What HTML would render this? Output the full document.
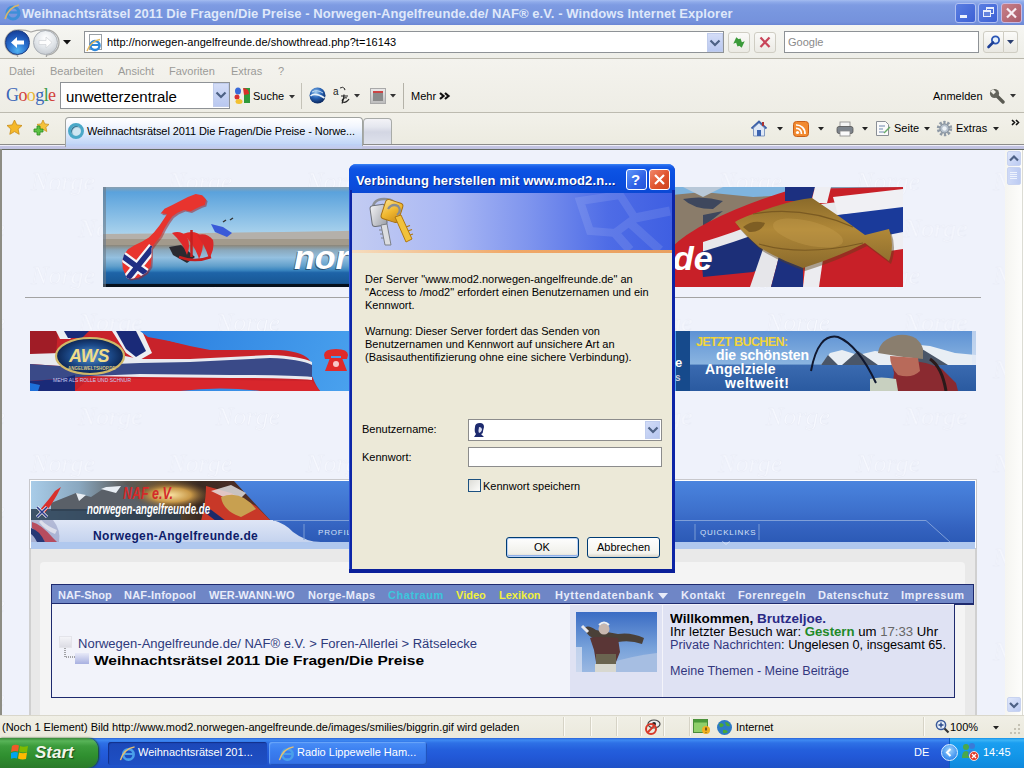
<!DOCTYPE html>
<html><head><meta charset="utf-8">
<style>
*{margin:0;padding:0;box-sizing:border-box}
html,body{width:1024px;height:768px;overflow:hidden;background:#f0f1f8;font-family:"Liberation Sans",sans-serif;}
.a{position:absolute}
.t{position:absolute;white-space:nowrap;line-height:1}
</style></head><body>
<!-- TITLE BAR -->
<div class="a" style="left:0;top:0;width:1024px;height:25px;background:linear-gradient(#a4bcf0 0,#8eaaea 2px,#7e9be2 5px,#7896df 50%,#7592dc 88%,#6a86d4 100%)"></div>
<svg class="a" style="left:3px;top:3px" width="18" height="18" viewBox="0 0 18 18"><circle cx="10" cy="10" r="6" fill="none" stroke="#3d8fd8" stroke-width="3"/><path d="M5 9.5h10" stroke="#3d8fd8" stroke-width="2.4"/><path d="M2 16C4 8 10 3 16 2" fill="none" stroke="#d9b56a" stroke-width="1.6"/></svg>
<div class="t" style="left:22px;top:7px;font-size:13px;font-weight:bold;color:#dfe8fa;letter-spacing:0.07px">Weihnachtsrätsel 2011 Die Fragen/Die Preise - Norwegen-Angelfreunde.de/ NAF® e.V. - Windows Internet Explorer</div>
<div class="a" style="left:955px;top:3px;width:21px;height:20px;border:1px solid #b0c0f2;border-radius:3px;background:linear-gradient(135deg,#5a7ee2,#3d60d4)"></div>
<div class="a" style="left:960px;top:15px;width:7px;height:3px;background:#eef2fc"></div>
<div class="a" style="left:978px;top:3px;width:20px;height:20px;border:1px solid #b0c0f2;border-radius:3px;background:linear-gradient(135deg,#5a7ee2,#3d60d4)"></div>
<div class="a" style="left:986px;top:7px;width:8px;height:7px;border:1px solid #e8eefc;border-top-width:2px"></div>
<div class="a" style="left:983px;top:10px;width:8px;height:7px;border:1px solid #e8eefc;border-top-width:2px;background:#6384de"></div>
<div class="a" style="left:1001px;top:3px;width:21px;height:20px;border:1px solid #c8b8e0;border-radius:3px;background:linear-gradient(135deg,#c88088,#a85a6a)"></div>
<svg class="a" style="left:1001px;top:3px" width="21" height="20"><path d="M6 5.5L15 14.5M15 5.5L6 14.5" stroke="#f8eef4" stroke-width="2.2"/></svg>

<!-- ADDRESS ROW -->
<div class="a" style="left:0;top:25px;width:1024px;height:33px;background:linear-gradient(#f6f6f2,#eeeee8)"></div>
<div class="a" style="left:0;top:58px;width:1024px;height:1px;background:#b8b6ab"></div>
<!-- nav pill -->
<svg class="a" style="left:3px;top:28px" width="58" height="29"><path d="M14.5 2 Q22 1.5 28 4 Q34 1.5 43.5 2 A12.5 12.5 0 1 1 43.5 27 A12.5 12.5 0 0 1 14.5 27 A12.5 12.5 0 0 1 14.5 2z" fill="none" stroke="#a8a8a6" stroke-width="1.3"/></svg>
<div class="a" style="left:5px;top:30px;width:25px;height:25px;border-radius:50%;background:radial-gradient(circle at 50% 85%,#52b4f2 0,#2a72d0 40%,#1a4aa8 75%,#123a8a 100%);border:1px solid #1a3a80"></div>
<svg class="a" style="left:5px;top:30px" width="25" height="25"><path d="M6 12.5L12 7v3.5h7v4h-7V18z" fill="#fff"/></svg>
<div class="a" style="left:33px;top:30px;width:25px;height:25px;border-radius:50%;background:radial-gradient(circle at 50% 30%,#ffffff 0,#e2e6ea 50%,#b9bfc6 100%);border:1px solid #a9aeb4"></div>
<svg class="a" style="left:33px;top:30px" width="25" height="25"><path d="M19 12.5L13 7v3.5H6v4h7V18z" fill="#fdfdfd" stroke="#c9cdd2" stroke-width="0.6"/></svg>
<svg class="a" style="left:63px;top:40px" width="10" height="6"><path d="M0 0h8L4 4.5z" fill="#111"/></svg>
<!-- address box -->
<div class="a" style="left:84px;top:31px;width:640px;height:22px;background:#fff;border:1px solid #8e9296"></div>
<div class="a" style="left:89px;top:34px;width:13px;height:16px;background:#fff;border:1px solid #9aa0a6"></div>
<svg class="a" style="left:86px;top:38px" width="16" height="14" viewBox="0 0 16 14"><circle cx="9" cy="7.5" r="4.5" fill="none" stroke="#2c86d8" stroke-width="2.5"/><path d="M4.5 7h9" stroke="#2c86d8" stroke-width="2"/><path d="M1 13C3 7 8 2 14 1.5" fill="none" stroke="#e3b85c" stroke-width="1.4"/></svg>
<div class="t" style="left:107px;top:37px;font-size:11px;color:#000;letter-spacing:0.05px">http://norwegen-angelfreunde.de/showthread.php?t=16143</div>
<div class="a" style="left:707px;top:33px;width:16px;height:19px;background:linear-gradient(#d4ddf7,#b9c8f0);border:1px solid #c0ccec"></div>
<svg class="a" style="left:709px;top:39px" width="12" height="8"><path d="M1.5 1.5L6 6l4.5-4.5" fill="none" stroke="#4d6185" stroke-width="2.2"/></svg>
<!-- refresh / stop -->
<div class="a" style="left:728px;top:32px;width:22px;height:21px;border:1px solid #cfcdc3;border-radius:3px;background:linear-gradient(#fafaf8,#ebeae4)"></div>
<svg class="a" style="left:730px;top:34px" width="18" height="17"><path d="M8 3L3 8h3v4h3V8h2z" fill="#3b9a3a" transform="rotate(-20 8 8)"/><path d="M10 14l5-5h-3V5H9v4H7z" fill="#3b9a3a" transform="rotate(-20 10 9)"/></svg>
<div class="a" style="left:754px;top:32px;width:22px;height:21px;border:1px solid #cfcdc3;border-radius:3px;background:linear-gradient(#fafaf8,#ebeae4)"></div>
<svg class="a" style="left:754px;top:32px" width="22" height="21"><path d="M6.5 5.5L15.5 15M15.5 5.5L6.5 15" stroke="#c8455a" stroke-width="2.2"/></svg>
<!-- search box -->
<div class="a" style="left:784px;top:31px;width:195px;height:22px;background:#fff;border:1px solid #8e9296"></div>
<div class="t" style="left:788px;top:37px;font-size:11px;color:#8a8a8a">Google</div>
<div class="a" style="left:983px;top:31px;width:21px;height:22px;border:1px solid #cfcdc3;border-radius:3px 0 0 3px;background:linear-gradient(#fbfbf9,#e9e8e2)"></div>
<svg class="a" style="left:986px;top:34px" width="16" height="16"><circle cx="9.5" cy="6" r="3.6" fill="#e6f1fb" stroke="#2a55b5" stroke-width="1.8"/><path d="M7 8.5L2.5 13" stroke="#1d3f95" stroke-width="2.6" stroke-linecap="round"/></svg>
<div class="a" style="left:1004px;top:31px;width:14px;height:22px;border:1px solid #cfcdc3;border-left:none;border-radius:0 3px 3px 0;background:linear-gradient(#fbfbf9,#e9e8e2)"></div>
<svg class="a" style="left:1007px;top:40px" width="8" height="5"><path d="M0 0h7L3.5 4z" fill="#2b3f70"/></svg>

<!-- MENU + GOOGLE -->
<div class="a" style="left:0;top:59px;width:1024px;height:53px;background:linear-gradient(#f4f3ee,#eeede5)"></div>
<div class="a" style="left:0;top:112px;width:1024px;height:1px;background:#bdbbb0"></div>
<div class="t" style="left:9px;top:66px;font-size:11px;color:#9b9b98;word-spacing:0px">Datei</div>
<div class="t" style="left:50px;top:66px;font-size:11px;color:#9b9b98">Bearbeiten</div>
<div class="t" style="left:118px;top:66px;font-size:11px;color:#9b9b98">Ansicht</div>
<div class="t" style="left:169px;top:66px;font-size:11px;color:#9b9b98">Favoriten</div>
<div class="t" style="left:231px;top:66px;font-size:11px;color:#9b9b98">Extras</div>
<div class="t" style="left:278px;top:66px;font-size:11px;color:#9b9b98">?</div>
<!-- google logo -->
<div class="t" style="left:6px;top:86px;font-family:'Liberation Serif',serif;font-size:18px;letter-spacing:-0.6px"><span style="color:#3a66b8">G</span><span style="color:#d2413a">o</span><span style="color:#e8b534">o</span><span style="color:#3a66b8">g</span><span style="color:#3a9c4a">l</span><span style="color:#d2413a">e</span></div>
<div class="a" style="left:60px;top:82px;width:170px;height:27px;background:#fff;border:1px solid #8e9296"></div>
<div class="t" style="left:66px;top:89px;font-size:15px;color:#000">unwetterzentrale</div>
<div class="a" style="left:213px;top:83px;width:16px;height:24px;background:linear-gradient(#d4ddf7,#b9c8f0);border:1px solid #c0ccec"></div>
<svg class="a" style="left:215px;top:91px" width="12" height="8"><path d="M1.5 1.5L6 6l4.5-4.5" fill="none" stroke="#4d6185" stroke-width="2.2"/></svg>
<svg class="a" style="left:233px;top:86px" width="18" height="19"><path d="M11 2 H17 V17 H11z" fill="#2f9a3a"/><path d="M10 2 Q16 2 16 8 L11 9z" fill="#d8302a"/><ellipse cx="5" cy="5" rx="3" ry="3.5" fill="#3a6ad8"/><ellipse cx="4" cy="11" rx="2.5" ry="2.5" fill="#d83030"/><ellipse cx="6" cy="15.5" rx="3.5" ry="2.5" fill="#f2c030"/></svg>
<div class="t" style="left:253px;top:91px;font-size:11px;color:#000">Suche</div>
<svg class="a" style="left:289px;top:95px" width="7" height="4"><path d="M0 0h6L3 3.5z" fill="#333"/></svg>
<div class="a" style="left:301px;top:83px;width:1px;height:26px;background:#c4c2b8"></div>
<svg class="a" style="left:309px;top:87px" width="17" height="17"><defs><radialGradient id="ge" cx="0.4" cy="0.3" r="0.7"><stop offset="0" stop-color="#9ccaf0"/><stop offset="0.5" stop-color="#2a66b8"/><stop offset="1" stop-color="#0a2860"/></radialGradient></defs><circle cx="8.5" cy="8.5" r="8" fill="url(#ge)"/><path d="M1.5 9 Q6 5 15.5 11" fill="none" stroke="#e8f2fa" stroke-width="1.6"/><path d="M3 5 Q8 2 14 6" fill="none" stroke="#cfe4f6" stroke-width="0.9"/></svg>
<svg class="a" style="left:333px;top:86px" width="20" height="20" viewBox="0 0 20 20"><text x="0" y="9" font-family="Liberation Sans" font-size="10" fill="#222">a</text><path d="M7 2 Q10 0 12 3" fill="none" stroke="#333" stroke-width="1"/><path d="M11 3.5l1 -0.5 -0.2 1.2" fill="none" stroke="#333" stroke-width="0.8"/><path d="M8 10h7M11 8.5c0 4 -1 7 -2 9M14 12c-3 -1 -6 2 -4 4c2 1 5 -1 6 -3" fill="none" stroke="#222" stroke-width="1.2"/></svg>
<svg class="a" style="left:354px;top:94px" width="7" height="4"><path d="M0 0h6L3 3.5z" fill="#333"/></svg>
<div class="a" style="left:370px;top:88px;width:16px;height:16px;border:1px solid #a9a9a9;background:linear-gradient(#e8e8e8,#bdbdbd)"></div>
<div class="a" style="left:373px;top:91px;width:10px;height:10px;background:#8a8a8a;border-top:2px solid #c44"></div>
<svg class="a" style="left:390px;top:94px" width="7" height="4"><path d="M0 0h6L3 3.5z" fill="#333"/></svg>
<div class="a" style="left:403px;top:83px;width:1px;height:26px;background:#b4b2a8"></div>
<div class="t" style="left:411px;top:91px;font-size:11px;color:#000">Mehr</div>
<svg class="a" style="left:439px;top:92px" width="12" height="8"><path d="M1 1L4.5 4 1 7M6 1l3.5 3L6 7" fill="none" stroke="#111" stroke-width="2.2"/></svg>
<div class="t" style="left:933px;top:91px;font-size:11px;color:#000">Anmelden</div>
<svg class="a" style="left:989px;top:88px" width="18" height="16"><path d="M7 7L14 14" stroke="#5a5a52" stroke-width="3.4" stroke-linecap="round"/><circle cx="5.5" cy="5.5" r="4.6" fill="#64645c"/><path d="M1.5 3.5L4.5 6.5 7 4 4 1z" fill="#eeede5"/></svg>
<svg class="a" style="left:1010px;top:94px" width="7" height="4"><path d="M0 0h6L3 3.5z" fill="#333"/></svg>

<!-- TAB ROW -->
<div class="a" style="left:0;top:113px;width:1024px;height:32px;background:linear-gradient(#f2f1ea,#ecebe0)"></div>
<svg class="a" style="left:6px;top:119px" width="17" height="17" viewBox="0 0 17 17"><path d="M8.5 1l2.3 4.9 5.2.6-3.9 3.6 1.1 5.2-4.7-2.7-4.7 2.7 1.1-5.2L1 6.5l5.2-.6z" fill="#f5b82a" stroke="#c88a12" stroke-width="0.8"/></svg>
<svg class="a" style="left:33px;top:119px" width="17" height="17" viewBox="0 0 17 17"><path d="M10 1l1.8 3.9 4.2.5-3.1 2.9.9 4.2-3.8-2.2-3.8 2.2.9-4.2L4 5.4l4.2-.5z" fill="#f5c23a" stroke="#c88a12" stroke-width="0.7"/><path d="M1 10h3V7h3v3h3v3H7v3H4v-3H1z" fill="#5cc244" stroke="#2c8a20" stroke-width="0.8"/></svg>
<div class="a" style="left:65px;top:117px;width:298px;height:29px;border:1px solid #a0a3a0;border-bottom:none;border-radius:4px 4px 0 0;background:linear-gradient(#ffffff 0,#f2f6fe 30%,#dae7fb 60%,#bcd2f6 100%)"></div>
<div class="a" style="left:68px;top:123px;width:16px;height:16px;border-radius:50%;border:3px solid #4aa8c8;background:#cfe6f2;box-shadow:inset 1px 1px 1px #2a6a8a"></div>
<div class="t" style="left:87px;top:126px;font-size:11px;color:#000;letter-spacing:-0.09px">Weihnachtsrätsel 2011 Die Fragen/Die Preise - Norwe...</div>
<div class="a" style="left:363px;top:118px;width:29px;height:27px;border:1px solid #a8aba8;border-bottom:none;border-radius:4px 4px 0 0;background:linear-gradient(#f3f3f7 0,#e5e7ef 30%,#d3d6e3 50%,#dfe2ec 100%)"></div>
<div class="a" style="left:0;top:144px;width:1024px;height:5px;background:linear-gradient(#8c8c8a 0,#8c8c8a 1px,#eeeef8 1px,#eeeef8 2px,#c4c4e2 2px,#c0c2e0 100%)"></div>

<div class="a" style="left:66px;top:144px;width:296px;height:5px;background:linear-gradient(#bcd2f6,#c2cdf0 60%,#c0c4e4)"></div>
<div class="a" style="left:65px;top:144px;width:1px;height:3px;background:#a0a3a0"></div><div class="a" style="left:362px;top:144px;width:1px;height:2px;background:#a0a3a0"></div>
<div class="a" style="left:0;top:149px;width:1024px;height:1px;background:#646a62"></div>
<!-- right tools -->
<svg class="a" style="left:750px;top:120px" width="18" height="17" viewBox="0 0 18 17"><path d="M1.5 8.5L9 1.5l7.5 7" fill="none" stroke="#3b5fa8" stroke-width="1.8"/><path d="M3.5 8v8h11V8L9 3z" fill="#dfe8f6" stroke="#6a86b8" stroke-width="0.8"/><rect x="7" y="10" width="4" height="6" fill="#3c64b0"/><rect x="12" y="2" width="2" height="4" fill="#a33"/></svg>
<svg class="a" style="left:777px;top:127px" width="7" height="4"><path d="M0 0h6L3 3.5z" fill="#222"/></svg>
<svg class="a" style="left:793px;top:121px" width="16" height="16"><rect x="0.5" y="0.5" width="15" height="15" rx="3" fill="#f28a30" stroke="#c8601a"/><circle cx="4.5" cy="11.5" r="1.6" fill="#fff"/><path d="M3 7.5a5 5 0 0 1 5.5 5.5M3 4a8.5 8.5 0 0 1 9 9" fill="none" stroke="#fff" stroke-width="1.7"/></svg>
<svg class="a" style="left:818px;top:127px" width="7" height="4"><path d="M0 0h6L3 3.5z" fill="#222"/></svg>
<svg class="a" style="left:836px;top:121px" width="18" height="16"><rect x="4" y="1" width="10" height="5" fill="#f4f4f4" stroke="#888" stroke-width="0.8"/><rect x="1" y="5.5" width="16" height="7" rx="2" fill="#7d848c" stroke="#555" stroke-width="0.8"/><rect x="4" y="10" width="10" height="5" fill="#fafafa" stroke="#888" stroke-width="0.8"/></svg>
<svg class="a" style="left:862px;top:127px" width="7" height="4"><path d="M0 0h6L3 3.5z" fill="#222"/></svg>
<svg class="a" style="left:875px;top:120px" width="17" height="17"><path d="M1.5 1.5h9l3 3v11h-12z" fill="#fafafa" stroke="#8a8f96"/><path d="M4 6h6M4 9h4M4 12h5" stroke="#6f87b0" stroke-width="1.2"/><path d="M9 13l6-6" stroke="#6a6" stroke-width="1.4"/></svg>
<div class="t" style="left:894px;top:123px;font-size:11px;color:#000">Seite</div>
<svg class="a" style="left:924px;top:127px" width="7" height="4"><path d="M0 0h6L3 3.5z" fill="#222"/></svg>
<svg class="a" style="left:936px;top:120px" width="17" height="17" viewBox="0 0 17 17"><circle cx="8.5" cy="8.5" r="6.2" fill="none" stroke="#8f9aa6" stroke-width="3" stroke-dasharray="2.3 1.6"/><circle cx="8.5" cy="8.5" r="4.6" fill="#b5c0cc" stroke="#7a8694"/><circle cx="8.5" cy="8.5" r="2.2" fill="#eef3f8"/></svg>
<div class="t" style="left:956px;top:123px;font-size:11px;color:#000">Extras</div>
<svg class="a" style="left:993px;top:127px" width="7" height="4"><path d="M0 0h6L3 3.5z" fill="#222"/></svg>
<svg class="a" style="left:1011px;top:119px" width="10" height="7"><path d="M1 1L3.5 3.5 1 6M5 1l2.5 2.5L5 6" fill="none" stroke="#111" stroke-width="1.6"/></svg>

<!-- CONTENT -->
<div class="a" style="left:2px;top:150px;width:1022px;height:565px;background:#eff2fb;overflow:hidden"></div>
<div class="a" style="left:0;top:149px;width:2px;height:566px;background:#8d8d84"></div>
<svg class="a" style="left:2px;top:150px" width="1003" height="565"><defs><pattern id="wm" patternUnits="userSpaceOnUse" width="137.5" height="94" x="-2" y="-150"><text x="78.5" y="49" font-family="Liberation Serif" font-style="italic" font-size="26" fill="#f7f9ff" stroke="#e7eaf5" stroke-width="0.5">Norge</text><text x="-59" y="49" font-family="Liberation Serif" font-style="italic" font-size="26" fill="#f7f9ff" stroke="#e7eaf5" stroke-width="0.5">Norge</text><text x="31" y="96" font-family="Liberation Serif" font-style="italic" font-size="26" fill="#f7f9ff" stroke="#e7eaf5" stroke-width="0.5">Norge</text><text x="31" y="2" font-family="Liberation Serif" font-style="italic" font-size="26" fill="#f7f9ff" stroke="#e7eaf5" stroke-width="0.5">Norge</text></pattern></defs><rect width="1003" height="565" fill="url(#wm)"/></svg>

<!-- scrollbar -->
<div class="a" style="left:1005px;top:150px;width:17px;height:565px;background:linear-gradient(90deg,#f5f5f1,#fdfdfb)"></div>
<div class="a" style="left:1022px;top:150px;width:2px;height:565px;background:#fff;border-left:1px solid #dcdcd4"></div>
<div class="a" style="left:1007px;top:151px;width:14px;height:15px;border:1px solid #c8d3f0;border-radius:2px;background:linear-gradient(135deg,#dfe7fb,#bccbf2)"></div>
<svg class="a" style="left:1008px;top:153px" width="12" height="10"><path d="M2 7.5L6 3.5l4 4" fill="none" stroke="#4d6185" stroke-width="2.2"/></svg>
<div class="a" style="left:1007px;top:167px;width:14px;height:18px;border:1px solid #c8d3f0;border-radius:2px;background:linear-gradient(90deg,#cfdaf7,#bccbf2)"></div>
<div class="a" style="left:1010px;top:172px;width:7px;height:1px;background:#eef3fd;box-shadow:0 2px 0 #eef3fd,0 4px 0 #eef3fd,0 6px 0 #eef3fd"></div>
<div class="a" style="left:1007px;top:697px;width:14px;height:15px;border:1px solid #c8d3f0;border-radius:2px;background:linear-gradient(135deg,#dfe7fb,#bccbf2)"></div>
<svg class="a" style="left:1008px;top:700px" width="12" height="10"><path d="M2 3L6 7l4-4" fill="none" stroke="#4d6185" stroke-width="2.2"/></svg>

<!-- BANNER 1 -->
<svg class="a" style="left:103px;top:187px" width="800" height="100" viewBox="0 0 800 100">
<defs>
<linearGradient id="sky" x1="0" y1="0" x2="0" y2="1"><stop offset="0" stop-color="#8aa0b0"/><stop offset="0.05" stop-color="#5aa2dc"/><stop offset="0.45" stop-color="#a6d0ec"/><stop offset="0.5" stop-color="#b8d8ea"/></linearGradient>
<linearGradient id="sea" x1="0" y1="0" x2="0" y2="1"><stop offset="0" stop-color="#8c8678"/><stop offset="0.12" stop-color="#8aa8bc"/><stop offset="0.3" stop-color="#94c0e0"/><stop offset="0.5" stop-color="#62a0cc"/><stop offset="0.6" stop-color="#3a86c0"/><stop offset="0.66" stop-color="#1e64a8"/><stop offset="0.9" stop-color="#185896"/><stop offset="1" stop-color="#0c2a50"/></linearGradient>
<linearGradient id="fish" x1="0" y1="0" x2="0" y2="1"><stop offset="0" stop-color="#8a6a2a"/><stop offset="0.45" stop-color="#b08838"/><stop offset="1" stop-color="#8a6a2c"/></linearGradient>
</defs>
<rect width="800" height="100" fill="url(#sky)"/>
<path d="M0 47 L100 46 L180 45 L240 44 L300 42 L360 40 L400 39 L440 30 L470 36 L520 28 L570 22 L570 60 L0 60z" fill="#b4b0aa"/>
<path d="M330 46 L380 42 L420 34 L450 26 L490 30 L530 24 L570 20 L570 58 L330 58z" fill="#4a5460" opacity="0.75"/>
<path d="M380 50 L450 40 L520 36 L570 34 L570 58 L380 58z" fill="#8a7a66" opacity="0.8"/>
<rect y="52" width="570" height="8" fill="#a09888" opacity="0.9"/>
<rect y="58" width="800" height="42" fill="url(#sea)"/>
<rect y="97" width="800" height="3" fill="#06101c"/>
<rect width="3" height="100" fill="#6a7a88" opacity="0.6"/>
<!-- norway map -->
<path d="M23.7,90.8 19.8,81.7 19.2,73.9 21.1,67.4 25,62.2 31.5,58.3 39.3,54.4 45.9,50.5 51.1,45.3 56.3,38.8 61.5,31 64.1,27 57.6,26.4 61.5,21.8 69.3,17.9 77.1,14 84.9,10.1 92.7,6.9 99.2,8.2 103.1,12.7 101.8,17.9 97.9,19.2 92.7,21.8 87.5,24.4 81,23.1 74.5,25.7 69.3,29.6 65.4,34.9 61.5,41.4 57.6,49.2 52.4,55.7 48.5,60.9 48.5,70 47.8,79.1 43.3,85.6 35.4,90.8 26.3,92.1z" fill="#b01a1a" transform="translate(1.5,1.5)" opacity="0.5"/>
<path d="M23.7,90.8 19.8,81.7 19.2,73.9 21.1,67.4 25,62.2 31.5,58.3 39.3,54.4 45.9,50.5 51.1,45.3 56.3,38.8 61.5,31 64.1,27 57.6,26.4 61.5,21.8 69.3,17.9 77.1,14 84.9,10.1 92.7,6.9 99.2,8.2 103.1,12.7 101.8,17.9 97.9,19.2 92.7,21.8 87.5,24.4 81,23.1 74.5,25.7 69.3,29.6 65.4,34.9 61.5,41.4 57.6,49.2 52.4,55.7 48.5,60.9 48.5,70 47.8,79.1 43.3,85.6 35.4,90.8 26.3,92.1z" fill="#e8342e"/>
<clipPath id="nc"><path d="M23.7,90.8 19.8,81.7 19.2,73.9 21.1,67.4 25,62.2 31.5,58.3 39.3,54.4 45.9,50.5 51.1,45.3 56.3,38.8 61.5,31 64.1,27 57.6,26.4 61.5,21.8 69.3,17.9 77.1,14 84.9,10.1 92.7,6.9 99.2,8.2 103.1,12.7 101.8,17.9 97.9,19.2 92.7,21.8 87.5,24.4 81,23.1 74.5,25.7 69.3,29.6 65.4,34.9 61.5,41.4 57.6,49.2 52.4,55.7 48.5,60.9 48.5,70 47.8,79.1 43.3,85.6 35.4,90.8 26.3,92.1z"/></clipPath>
<g clip-path="url(#nc)"><path d="M18 68 L48 90 M50 60 L22 95" stroke="#f4f4f8" stroke-width="10"/><path d="M18 68 L48 90 M50 60 L22 95" stroke="#1e2e84" stroke-width="5.5"/></g>
<!-- ship -->
<path d="M66 60 L78 58 L92 70 L84 76 L70 68z" fill="#2a2a30"/>
<path d="M69 46 Q78 43 84 50 Q88 58 84 68 Q80 56 69 46z" fill="#e0282a"/>
<path d="M80 47 Q92 42 99 50 Q102 60 96 72 Q92 58 80 47z" fill="#e22a28"/>
<path d="M94 48 Q104 45 110 53 Q112 62 106 72 Q103 60 94 48z" fill="#d82828"/>
<path d="M88.5 43 V70 M76 70 Q92 76 108 70" stroke="#c42020" stroke-width="2.5" fill="none"/>
<path d="M108 37 L120 40 L129 46 L124 50 L112 45z" fill="#3a5ad8"/>
<path d="M120 35 l3 -2 M127 33 l3 -2" stroke="#333" stroke-width="1.5"/>
<text x="190" y="83" font-family="Liberation Sans" font-weight="bold" font-style="italic" font-size="34" fill="#1a2a40" opacity="0.6">nor</text>
<text x="191" y="82" font-family="Liberation Sans" font-weight="bold" font-style="italic" font-size="34" fill="#fff">nor</text>
<!-- flag right -->
<path d="M569 0 H700 L569 60z" fill="#7fb4de"/>
<path d="M569 8 L600 5 L650 10 L690 8 L600 45 L569 60z" fill="#8a7c6a"/>
<path d="M580 12 Q600 8 620 14 L610 22 Q590 22 580 12z M600 28 L620 24 L600 40z" fill="#2a3a5a" opacity="0.8"/>
<path d="M569 60 Q600 30 690 2 L800 0 V100 H569z" fill="#c82028"/>
<path d="M600 55 Q650 40 690 20 L800 8 V30 L700 45 L640 78 L600 82z" fill="#e8e8ec"/>
<path d="M598 65 Q650 50 690 32 L800 22 V52 L710 60 L650 85 L600 90z" fill="#1c2f78"/>
<path d="M647 100 L660 62 L678 62 L668 100z" fill="#e6e6ea"/>
<path d="M668 100 L678 62 L700 62 L700 100z" fill="#1c3080"/>
<path d="M700 100 L703 72 L720 72 L716 100z" fill="#ececf0"/>
<path d="M580 0 H620 L600 10z" fill="#b8c8d8"/>
<path d="M682 0 H712 L708 14 L682 14z" fill="#1c3080"/>
<path d="M712 0 H728 L724 16 L708 16z" fill="#eeeef2"/>
<path d="M730 10 L800 2 V22 L735 28z" fill="#f0f0f4"/>
<path d="M735 28 L800 20 V48 L740 52z" fill="#1a3a9a"/>
<path d="M775 50 L800 45 V62 L780 65z" fill="#eeeef2"/>
<path d="M632 35 Q640 30 670 20 Q695 12 709 11 Q735 28 762 48 L786 42 Q792 58 786 74 L762 56 Q735 70 700 81 Q675 72 656 60 Q640 46 632 35z" fill="#5a4018" opacity="0.45" transform="translate(2,3)"/>
<path d="M632 35 Q640 30 670 20 Q695 12 709 11 Q735 28 762 48 L786 42 Q792 58 786 74 L762 56 Q735 70 700 81 Q675 72 656 60 Q640 46 632 35z" fill="url(#fish)"/>
<path d="M650 27 Q700 18 750 40 M656 57 Q700 70 760 56" fill="none" stroke="#7a5a22" stroke-width="1.1"/>
<path d="M640 40 Q650 32 662 36 Q658 46 646 45z" fill="#7e5e24"/>
<ellipse cx="705" cy="46" rx="36" ry="12" fill="#c8a050" opacity="0.35" transform="rotate(14 705 46)"/>
<text x="570" y="83" font-family="Liberation Sans" font-weight="bold" font-style="italic" font-size="34" fill="#fff">de</text>
</svg>
<div class="a" style="left:25px;top:297px;width:956px;height:1px;background:#a3a3a3"></div>

<!-- BANNER 2 -->
<svg class="a" style="left:30px;top:331px" width="946" height="60" viewBox="0 0 946 60">
<defs><linearGradient id="sk2" gradientUnits="userSpaceOnUse" x1="0" y1="0" x2="300" y2="120"><stop offset="0" stop-color="#1a6cd8"/><stop offset="1" stop-color="#4aa2ee"/></linearGradient>
<radialGradient id="aws" cx="0.5" cy="0.5" r="0.5"><stop offset="0" stop-color="#5a9ad0"/><stop offset="0.6" stop-color="#1c4a8a"/><stop offset="1" stop-color="#0c2450"/></radialGradient>
<linearGradient id="sea2" x1="0" y1="0" x2="0" y2="1"><stop offset="0" stop-color="#5e92d4"/><stop offset="0.55" stop-color="#8ab4e0"/><stop offset="0.57" stop-color="#3a6ab0"/><stop offset="1" stop-color="#2a5aa0"/></linearGradient></defs>
<rect width="946" height="60" fill="url(#sk2)"/>
<!-- left flag -->
<path d="M0 0 H110 Q140 12 180 19 L250 19 Q275 21 280 30 L282 45 Q286 55 290 60 H0z" fill="#c8222a"/>
<path d="M0 0 H28 L26 23 H0z" fill="#a01c26"/>
<path d="M0 23 L30 22 L60 20 L90 24 L110 28 L160 28 L240 24 Q270 25 282 31 L282 49 Q260 47 200 47 L110 46 L60 45 L30 35 L0 33z" fill="#e8eaf0"/>
<path d="M0 33 L30 35 L60 34 L110 32 L160 31 L240 27 Q270 28 282 34 L282 46 Q260 44 200 44 L110 43 L60 45 L30 48 L0 50z" fill="#3a4a88"/>
<path d="M0 50 L30 48 L45 44 L45 60 H0z" fill="#1a2a78"/>
<path d="M0 52 L10 54 L8 60 H0z" fill="url(#sk2)"/>
<path d="M26 0 H50 L40 8 L30 8z" fill="#eceef2"/>
<path d="M34 0 H59 L52 7 L38 7z" fill="#1a2a78"/>
<path d="M82 0 H112 L122 22 L108 30 L96 22z" fill="#eceef2"/>
<path d="M86 0 H106 L116 20 L106 26 L96 18z" fill="#1a2a78"/>
<path d="M110 0 H160 V14 Q140 10 118 6z" fill="url(#sk2)"/>
<path d="M45 60 L60 47 L110 48 L200 49 L282 50 Q286 55 290 60z" fill="#d8262c"/><path d="M150 60 Q190 55 230 60z" fill="url(#sk2)"/>
<ellipse cx="60" cy="25" rx="34" ry="18" fill="url(#aws)" stroke="#d0b868" stroke-width="2.2"/>
<text x="39" y="31" font-family="Liberation Sans" font-weight="bold" font-style="italic" font-size="18" fill="#f0dc8a" letter-spacing="-0.3">AWS</text>
<text x="38" y="39" font-family="Liberation Sans" font-weight="bold" font-size="4.5" fill="#d8c888">ANGELWELTSHOP.DE</text>
<text x="23" y="51" font-family="Liberation Sans" font-size="5" fill="#c8c8f0">MEHR ALS ROLLE UND SCHNUR</text>
<rect x="158" width="1" height="0" fill="none"/>
<path d="M294 24 Q294 18 306 18 Q318 18 318 24 L317 28 L311 28 L311 25 L301 25 L301 28 L295 28z M300 27 L312 27 L317 40 H295z" fill="#e02a2a"/><circle cx="306" cy="33" r="3" fill="#f8c8c8"/>
<!-- right banner -->
<rect x="646" width="14" height="60" fill="#164a8c"/>
<text x="645" y="36" font-family="Liberation Sans" font-weight="bold" font-size="13" fill="#fff">e</text>
<text x="645" y="50" font-family="Liberation Sans" font-weight="bold" font-size="10" fill="#ccd">s</text>
<rect x="660" width="286" height="60" fill="url(#sea2)"/>
<path d="M791 34 L800 22 L812 19 L828 24 L845 20 L860 22 L880 13 L900 15 L925 22 L946 24 V34z" fill="#e8eef4"/>
<path d="M791 34 L798 24 L808 34z M812 34 L828 20 L848 34z M880 34 L892 18 L905 26 L918 34z" fill="#4a5668"/>
<rect x="942" width="4" height="34" fill="#dfe8f6" opacity="0.7"/>
<path d="M862 32 Q888 26 912 38 L926 52 L928 60 H862 L864 42z" fill="#8a2a30"/>
<path d="M900 28 Q912 36 916 60" fill="none" stroke="#2a1a1a" stroke-width="3"/>
<path d="M848 22 Q850 8 868 4 Q888 2 893 18 L893 28 Q870 26 848 22z" fill="#8a7e6e"/>
<path d="M860 25 L888 27 L890 40 Q882 48 868 44 Q860 36 860 25z" fill="#b86a5a"/>
<path d="M840 48 Q850 45 866 48 L868 60 H840z" fill="#c8d0c0"/>
<path d="M781 40 Q788 2 808 6 Q828 14 846 52" fill="none" stroke="#101830" stroke-width="2"/>
<text x="666" y="15" font-family="Liberation Sans" font-weight="bold" font-size="12.5" fill="#f2d43a" letter-spacing="-0.6">JETZT BUCHEN:</text>
<text x="686" y="29" font-family="Liberation Sans" font-weight="bold" font-size="14" fill="#fff" letter-spacing="-0.1">die schönsten</text>
<text x="675" y="43" font-family="Liberation Sans" font-weight="bold" font-size="14" fill="#fff" letter-spacing="0.15">Angelziele</text>
<text x="695" y="57" font-family="Liberation Sans" font-weight="bold" font-size="14" fill="#fff" letter-spacing="0.6">weltweit!</text>
</svg>

<!-- FORUM HEADER -->
<div class="a" style="left:29px;top:479px;width:948px;height:70px;border:1px solid #c8c8cc;background:#fff"></div>
<div class="a" style="left:31px;top:481px;width:944px;height:61px;background:linear-gradient(#4a84de,#3d70cc 50%,#3463c0 75%,#2c5ab6)"></div>
<svg class="a" style="left:31px;top:481px" width="245" height="40" viewBox="0 0 245 40">
<defs><linearGradient id="ph" x1="0" y1="0" x2="1" y2="0"><stop offset="0" stop-color="#a8cce8"/><stop offset="0.2" stop-color="#8aa8c0"/><stop offset="0.4" stop-color="#5a5a58"/><stop offset="0.55" stop-color="#6a5230"/><stop offset="0.7" stop-color="#3a2a22"/><stop offset="1" stop-color="#5a3028"/></linearGradient>
<radialGradient id="sun" cx="0.5" cy="0.5" r="0.5"><stop offset="0" stop-color="#f8e0a0"/><stop offset="0.5" stop-color="#c89848"/><stop offset="1" stop-color="#6a4a2a" stop-opacity="0"/></radialGradient></defs>
<path d="M0 0 H203 L240 40 H0z" fill="url(#ph)"/>
<path d="M20 22 L45 12 L60 16 L75 6 L95 4 L115 14 L130 20 L130 30 L20 30z" fill="#5a6068"/>
<path d="M70 8 L75 6 L90 5 L85 12z M45 12 L55 14 L48 20z" fill="#e8eef4"/>
<ellipse cx="140" cy="14" rx="40" ry="14" fill="url(#sun)"/>
<path d="M0 28 H150 V40 H0z" fill="#2a3e52" opacity="0.85"/>
<path d="M175 5 L200 12 L225 25 L240 40 L170 40 Q175 20 175 5z" fill="#c83828"/>
<path d="M180 10 L200 4 L215 12 L205 22z" fill="#e8e8ea" opacity="0.8"/>
<path d="M190 16 Q210 8 225 28 L210 36 Q192 30 190 16z" fill="#c8a050"/>
<path d="M175 25 L195 40 H185 L172 30z" fill="#1a2a6a"/>
<text x="92" y="18" font-family="Liberation Sans" font-weight="bold" font-style="italic" font-size="16" fill="#d42a2a" textLength="50" lengthAdjust="spacingAndGlyphs">NAF e.V.</text>
<text x="56" y="33" font-family="Liberation Sans" font-weight="bold" font-style="italic" font-size="15" fill="#fff" textLength="123" lengthAdjust="spacingAndGlyphs">norwegen-angelfreunde.de</text>
<path d="M8 30 L18 18 L24 10 L30 6 L26 14 L20 24 L12 34z" fill="#d8302c"/>
<path d="M6 26 L16 36 M16 26 L6 36" stroke="#fff" stroke-width="3"/><path d="M6 26 L16 36 M16 26 L6 36" stroke="#2a3a8a" stroke-width="1.6"/>
</svg>

<svg class="a" style="left:31px;top:520px" width="944" height="29" viewBox="0 0 944 29">
<defs><linearGradient id="lb" x1="0" y1="0" x2="0" y2="1"><stop offset="0" stop-color="#dfe6f6"/><stop offset="1" stop-color="#bccdec"/></linearGradient>
<linearGradient id="tb" x1="0" y1="0" x2="0" y2="1"><stop offset="0" stop-color="#4b78c8"/><stop offset="1" stop-color="#2c5cb6"/></linearGradient></defs>
<path d="M0 0 H242 Q255 4 262 12 Q275 22 290 22 H944 V29 H0z" fill="url(#lb)"/>


<path d="M242 0.5 H895 L919 22" fill="none" stroke="#7f9fd8" stroke-width="1"/>
<rect y="22" width="944" height="7" fill="#b0c8ee"/>
<path d="M0 0 H22 Q30 10 28 22 H0z" fill="#8a90b8" opacity="0.5"/>
<path d="M1 2 Q10 4 22 18 L26 22 H14 Q8 12 1 8z" fill="#b83a4a" opacity="0.85"/>
<path d="M0 8 Q8 10 14 22 H6 Q3 16 0 14z" fill="#1a2a6a" opacity="0.9"/>
<path d="M10 0 Q16 6 26 10 L24 14 Q14 10 8 2z" fill="#f0f0f4" opacity="0.7"/>
<line x1="273" y1="4" x2="273" y2="20" stroke="#7b9cd4"/>
<line x1="664" y1="4" x2="664" y2="20" stroke="#7b9cd4"/>
<line x1="728" y1="4" x2="728" y2="20" stroke="#7b9cd4"/>
</svg>
<div class="t" style="left:93px;top:530px;font-size:12px;font-weight:bold;color:#0e1c6a;letter-spacing:0.35px">Norwegen-Angelfreunde.de</div>
<div class="t" style="left:318px;top:529px;font-size:8px;color:#d4e0f6;letter-spacing:0.8px">PROFIL</div>
<div class="t" style="left:700px;top:529px;font-size:8px;color:#d4e0f6;letter-spacing:0.8px">QUICKLINKS</div>
<svg class="a" style="left:722px;top:541px" width="8" height="4"><path d="M0.5 0.5L4 3.5 7.5 0.5" fill="none" stroke="#d4e0f6"/></svg>

<!-- FORUM BODY -->
<div class="a" style="left:31px;top:549px;width:944px;height:166px;background:#e9e9e9"></div>
<div class="a" style="left:29px;top:549px;width:2px;height:166px;background:#d0d0d0"></div>
<div class="a" style="left:975px;top:549px;width:2px;height:166px;background:#d0d0d0"></div>
<div class="a" style="left:40px;top:562px;width:925px;height:153px;background:#f4f4f4;border-radius:4px 4px 0 0"></div>
<div class="a" style="left:51px;top:584px;width:923px;height:21px;background:#6f86c6;border:1px solid #1e2a6e;border-bottom-width:2px"></div>
<div class="a" style="left:51px;top:604px;width:904px;height:94px;background:#f2f3fa;border:1px solid #1e2a6e;border-top:none"></div>
<div class="a" style="left:570px;top:605px;width:384px;height:92px;background:#dfe2f3"></div>
<div class="a" style="left:662px;top:605px;width:1px;height:92px;background:#f4f4fa"></div>
<!-- photo -->
<svg class="a" style="left:576px;top:612px" width="81" height="60" viewBox="0 0 81 60"><defs><linearGradient id="ps" x1="0" y1="0" x2="0" y2="1"><stop offset="0" stop-color="#3a6cc4"/><stop offset="0.6" stop-color="#78a2da"/><stop offset="1" stop-color="#9ab8e2"/></linearGradient></defs>
<rect width="81" height="60" fill="url(#ps)"/>
<path d="M30 52 Q55 44 81 41 V60 H30z" fill="#a6bee2"/>
<rect x="0" y="35" width="6" height="25" fill="#e0e6f4" opacity="0.7"/>
<path d="M8 16 Q12 12 20 18 L42 22 Q55 20 68 26 L66 32 Q55 28 42 30 L22 28 Q12 26 8 16z" fill="#4a4038"/>
<circle cx="28" cy="17" r="5.5" fill="#c8b8b0"/>
<path d="M23 13 Q28 8 33 13" fill="none" stroke="#f0f0f0" stroke-width="2"/>
<path d="M14 26 Q20 24 42 26 L44 40 L40 50 H20 L18 38z" fill="#5a3636"/>
<path d="M20 42 H40 V52 H20z" fill="#6a6450"/>
<path d="M19 52 H40 V60 H19z" fill="#d8d8d0"/>
<path d="M6 14 L12 20" stroke="#e8e8ee" stroke-width="3"/>
</svg>
<!-- nav text -->
<div class="t" style="left:58px;top:590px;font-size:11px;font-weight:bold;color:#e8ecfa">NAF-Shop</div>
<div class="t" style="left:124px;top:590px;font-size:11px;font-weight:bold;color:#e8ecfa;letter-spacing:0.2px">NAF-Infopool</div>
<div class="t" style="left:209px;top:590px;font-size:11px;font-weight:bold;color:#e8ecfa">WER-WANN-WO</div>
<div class="t" style="left:308px;top:590px;font-size:11px;font-weight:bold;color:#e8ecfa;letter-spacing:0.4px">Norge-Maps</div>
<div class="t" style="left:388px;top:590px;font-size:11px;font-weight:bold;color:#3cc6dc;letter-spacing:0.55px">Chatraum</div>
<div class="t" style="left:456px;top:590px;font-size:11px;font-weight:bold;color:#f0f03c">Video</div>
<div class="t" style="left:499px;top:590px;font-size:11px;font-weight:bold;color:#f0f03c">Lexikon</div>
<div class="t" style="left:555px;top:590px;font-size:11px;font-weight:bold;color:#e8ecfa;letter-spacing:0.65px">Hyttendatenbank</div>
<svg class="a" style="left:658px;top:593px" width="10" height="7"><path d="M0 0h10L5 6z" fill="#e8ecfa"/></svg>
<div class="t" style="left:681px;top:590px;font-size:11px;font-weight:bold;color:#e8ecfa;letter-spacing:0.5px">Kontakt</div>
<div class="t" style="left:738px;top:590px;font-size:11px;font-weight:bold;color:#e8ecfa;letter-spacing:0.4px">Forenregeln</div>
<div class="t" style="left:818px;top:590px;font-size:11px;font-weight:bold;color:#e8ecfa;letter-spacing:0.5px">Datenschutz</div>
<div class="t" style="left:901px;top:590px;font-size:11px;font-weight:bold;color:#e8ecfa;letter-spacing:0.55px">Impressum</div>
<!-- breadcrumb -->
<div class="a" style="left:59px;top:636px;width:13px;height:12px;background:linear-gradient(#f4f4f8,#dcdce4);border:1px solid #e4e4ea"></div>
<svg class="a" style="left:64px;top:648px" width="14" height="14"><path d="M1 0V9H13" fill="none" stroke="#555" stroke-dasharray="1 1"/></svg>
<div class="a" style="left:75px;top:653px;width:14px;height:11px;background:linear-gradient(#e8eaf8,#a8b0e0)"></div>
<div class="t" id="bc" style="left:78px;top:638px;font-size:12px;color:#2e3a7c;transform:scaleX(1.0845);transform-origin:0 0">Norwegen-Angelfreunde.de/ NAF® e.V. &gt; Foren-Allerlei &gt; Rätselecke</div>
<div class="t" id="ttl" style="left:94px;top:654px;font-size:13px;font-weight:bold;color:#000;transform:scaleX(1.1935);transform-origin:0 0">Weihnachtsrätsel 2011 Die Fragen/Die Preise</div>
<!-- welcome -->
<div class="t" id="w1" style="left:670px;top:613px;font-size:12px;color:#000;transform:scaleX(1.1255);transform-origin:0 0"><b>Willkommen, <span style="color:#2a2a86">Brutzeljoe.</span></b></div>
<div class="t" id="w2" style="left:670px;top:626px;font-size:12px;color:#000;transform:scaleX(1.0979);transform-origin:0 0">Ihr letzter Besuch war: <b style="color:#1f8a28">Gestern</b> um <span style="color:#666">17:33</span> Uhr</div>
<div class="t" id="w3" style="left:670px;top:639px;font-size:12px;color:#000;transform:scaleX(1.0607);transform-origin:0 0"><span style="color:#33377e">Private Nachrichten</span>: Ungelesen 0, insgesamt 65.</div>
<div class="t" id="w4" style="left:670px;top:665px;font-size:12px;color:#33377e;transform:scaleX(1.0456);transform-origin:0 0">Meine Themen - Meine Beiträge</div>

<!-- STATUS BAR -->
<div class="a" style="left:0;top:715px;width:1024px;height:23px;background:linear-gradient(#f0efe6,#ebe9dc);border-top:1px solid #d9d7cb"></div>
<div class="t" style="left:2px;top:722px;font-size:11px;color:#000">(Noch 1 Element) Bild http://www.mod2.norwegen-angelfreunde.de/images/smilies/biggrin.gif wird geladen</div>
<div class="a" style="left:563px;top:717px;width:1px;height:19px;background:#d6d3c6;box-shadow:1px 0 0 #fbfaf4"></div>
<div class="a" style="left:590px;top:717px;width:1px;height:19px;background:#d6d3c6;box-shadow:1px 0 0 #fbfaf4"></div>
<div class="a" style="left:616px;top:717px;width:1px;height:19px;background:#d6d3c6;box-shadow:1px 0 0 #fbfaf4"></div>
<div class="a" style="left:640px;top:717px;width:1px;height:19px;background:#d6d3c6;box-shadow:1px 0 0 #fbfaf4"></div>
<div class="a" style="left:663px;top:717px;width:1px;height:19px;background:#d6d3c6;box-shadow:1px 0 0 #fbfaf4"></div>
<div class="a" style="left:689px;top:717px;width:1px;height:19px;background:#d6d3c6;box-shadow:1px 0 0 #fbfaf4"></div>
<div class="a" style="left:923px;top:717px;width:1px;height:19px;background:#d6d3c6;box-shadow:1px 0 0 #fbfaf4"></div>
<svg class="a" style="left:644px;top:718px" width="18" height="17"><ellipse cx="10" cy="6" rx="6" ry="4" fill="#eee" stroke="#444" stroke-width="1.2"/><circle cx="10" cy="6" r="2" fill="#222"/><circle cx="7" cy="11" r="5" fill="none" stroke="#d83a2a" stroke-width="2"/><path d="M3.5 14.5L10.5 7.5" stroke="#d83a2a" stroke-width="2"/></svg>
<svg class="a" style="left:693px;top:719px" width="18" height="16"><rect x="0.5" y="0.5" width="14" height="13" fill="#8fcf6a" stroke="#4a8a3a"/><rect x="0.5" y="0.5" width="14" height="3" fill="#4a9a3a"/><circle cx="13" cy="11" r="4" fill="#f0b020"/><path d="M13 8.5v3M13 13v.5" stroke="#222" stroke-width="1.2"/></svg>
<svg class="a" style="left:716px;top:719px" width="17" height="17"><circle cx="8.5" cy="8.5" r="7.5" fill="#2d7ac4"/><path d="M3 5 Q6 3 8 6 Q6 9 4 8z M9 3 Q13 3 14 7 Q11 8 10 6z M7 11 Q10 10 12 13 Q9 15 7 14z" fill="#48a838"/></svg>
<div class="t" style="left:736px;top:722px;font-size:11px;color:#000">Internet</div>
<svg class="a" style="left:935px;top:719px" width="15" height="15"><circle cx="6" cy="6" r="4.6" fill="#e6eef8" stroke="#3a5a9a" stroke-width="1.5"/><path d="M3.5 6h5M6 3.5v5" stroke="#2a4a8a" stroke-width="1.4"/><path d="M9.5 9.5l4 4" stroke="#333" stroke-width="2.2"/></svg>
<div class="t" style="left:950px;top:722px;font-size:11px;color:#000">100%</div>
<svg class="a" style="left:993px;top:726px" width="7" height="4"><path d="M0 0h6L3 3.5z" fill="#222"/></svg>
<svg class="a" style="left:1010px;top:724px" width="12" height="12"><g fill="#c5c2b4"><rect x="8" y="0" width="2" height="2"/><rect x="4" y="4" width="2" height="2"/><rect x="8" y="4" width="2" height="2"/><rect x="0" y="8" width="2" height="2"/><rect x="4" y="8" width="2" height="2"/><rect x="8" y="8" width="2" height="2"/></g></svg>

<!-- TASKBAR -->
<div class="a" style="left:0;top:738px;width:1024px;height:30px;background:linear-gradient(#2a62d8 0,#3e8af2 2px,#2e70e6 5px,#245fdc 12px,#2259d8 60%,#1e50c6 100%)"></div>
<div class="a" style="left:0;top:738px;width:98px;height:30px;border-radius:0 11px 11px 0;background:linear-gradient(#3a8a3a 0,#58b458 3px,#3c9c3c 8px,#2f8f2f 60%,#2a7a2a 100%);box-shadow:1px 0 2px #1a4a1a"></div>
<svg class="a" style="left:11px;top:744px" width="18" height="17" viewBox="0 0 18 17"><path d="M1 2 Q4 0 8 1.5 L7 7.5 Q4 6.5 0 8z" fill="#f05a28"/><path d="M9 2 Q12 3.5 17 2 L16 8 Q12 9 8 7.5z" fill="#7fba00"/><path d="M0 9 Q4 7.5 7 8.5 L6 14.5 Q3 13.5 -1 15z" fill="#00a4ef"/><path d="M8 8.5 Q12 10 16 8.5 L15 15 Q11 16 7 14.5z" fill="#ffb900"/></svg>
<div class="t" style="left:35px;top:744px;font-size:17px;font-weight:bold;font-style:italic;color:#f2f6ea;text-shadow:1px 1px 1px #1a4a1a">Start</div>
<div class="a" style="left:108px;top:742px;width:159px;height:23px;border-radius:3px;background:linear-gradient(#1c48b8,#1e4fc4);box-shadow:inset 1px 1px 1px #12308a"></div>
<svg class="a" style="left:119px;top:745px" width="17" height="17" viewBox="0 0 18 18"><circle cx="10" cy="10" r="5.5" fill="none" stroke="#4aa0ea" stroke-width="2.8"/><path d="M5 9.5h10" stroke="#4aa0ea" stroke-width="2.2"/><path d="M1.5 16C4 8 10 3 16.5 2" fill="none" stroke="#e6c070" stroke-width="1.5"/></svg>
<div class="t" style="left:138px;top:747px;font-size:11px;color:#fff">Weihnachtsrätsel 201...</div>
<div class="a" style="left:269px;top:742px;width:158px;height:23px;border-radius:3px;background:linear-gradient(#4a8ef6,#3a7ef0 40%,#336fe4);box-shadow:inset -1px -1px 1px #2050b8,inset 1px 1px 1px #6aa6fa"></div>
<svg class="a" style="left:278px;top:745px" width="17" height="17" viewBox="0 0 18 18"><circle cx="10" cy="10" r="5.5" fill="none" stroke="#4aa0ea" stroke-width="2.8"/><path d="M5 9.5h10" stroke="#4aa0ea" stroke-width="2.2"/><path d="M1.5 16C4 8 10 3 16.5 2" fill="none" stroke="#e6c070" stroke-width="1.5"/></svg>
<div class="t" style="left:297px;top:747px;font-size:11px;color:#fff">Radio Lippewelle Ham...</div>
<div class="t" style="left:914px;top:747px;font-size:11px;color:#fff">DE</div>
<div class="a" style="left:949px;top:738px;width:75px;height:30px;background:linear-gradient(#1490e8 0,#3cb4f6 2px,#1a9ef0 5px,#1296e8 60%,#0f88dc 100%);border-left:1px solid #0a5cc0"></div>
<div class="a" style="left:941px;top:744px;width:17px;height:17px;border-radius:50%;background:radial-gradient(circle at 50% 35%,#9fd4fb,#3a8ff0 70%,#2a70d0);border:1px solid #dfefff"></div>
<svg class="a" style="left:944px;top:747px" width="11" height="11"><path d="M6.5 2L3 5.5 6.5 9" fill="none" stroke="#fff" stroke-width="2"/></svg>
<svg class="a" style="left:960px;top:742px" width="20" height="20"><circle cx="6" cy="5" r="3" fill="#4aa84a"/><path d="M2 16 Q2 9 6 9 Q10 9 10 16z" fill="#4aa84a"/><circle cx="12" cy="4" r="3" fill="#3a7ad8"/><path d="M8 14 Q8 8 12 8 Q16 8 16 14z" fill="#3a7ad8"/><circle cx="14" cy="14" r="4.5" fill="#e03a2a" stroke="#fff" stroke-width="0.8"/><path d="M12 12l4 4M16 12l-4 4" stroke="#fff" stroke-width="1.4"/></svg>
<div class="t" style="left:983px;top:747px;font-size:11px;color:#fff">14:45</div>

<!-- DIALOG -->
<div class="a" style="left:349px;top:164px;width:326px;height:409px;background:#0b3bd6;border-radius:7px 7px 0 0;border:1px solid #0a26a0;border-top-color:#2f6ff0"></div>
<div class="a" style="left:349px;top:164px;width:326px;height:29px;border-radius:7px 7px 0 0;background:linear-gradient(#3b86f6 0,#1e62ea 2px,#0d54e4 5px,#0a4fe0 45%,#0b4cdc 75%,#0a48d4 100%)"></div>
<div class="a" style="left:349px;top:190px;width:3px;height:383px;background:#0c24a6;box-shadow:inset 1px 0 0 #2a52d0"></div>
<div class="a" style="left:672px;top:190px;width:3px;height:383px;background:#0c24a6"></div>
<div class="a" style="left:349px;top:569px;width:326px;height:4px;background:#0a1f9a"></div>
<div class="t" style="left:356px;top:174px;font-size:13px;font-weight:bold;color:#fff;letter-spacing:0.15px;text-shadow:1px 1px 0 #0a2a90">Verbindung herstellen mit www.mod2.n...</div>
<div class="a" style="left:626px;top:169px;width:21px;height:21px;border:1px solid #fff;border-radius:3px;background:linear-gradient(135deg,#5f95f8,#2f62e6 60%,#2556d8)"></div>
<div class="t" style="left:631px;top:172px;font-size:15px;font-weight:bold;color:#fff">?</div>
<div class="a" style="left:649px;top:169px;width:21px;height:21px;border:1px solid #fff;border-radius:3px;background:linear-gradient(135deg,#f0866a,#e0542e 55%,#cc4420)"></div>
<svg class="a" style="left:649px;top:169px" width="21" height="21"><path d="M6 6L15 15M15 6L6 15" stroke="#fff" stroke-width="2.2"/></svg>
<!-- header banner -->
<div class="a" style="left:352px;top:193px;width:320px;height:58px;background:linear-gradient(90deg,#c3ccf2 0,#aab8f4 30%,#7f95ee 55%,#4e6ce6 80%,#3f5fe2 100%)"></div>
<svg class="a" style="left:560px;top:193px" width="112" height="57" opacity="0.1"><path d="M20 8 L60 2 L75 25 L55 40 L30 38z" fill="none" stroke="#fff" stroke-width="8"/><path d="M55 40 L70 57 M70 30 L100 57 M75 25 L110 18" stroke="#fff" stroke-width="9"/></svg>
<div class="a" style="left:352px;top:250px;width:320px;height:3px;background:linear-gradient(90deg,#f5dcbe,#f0a868 50%,#e8a060 100%)"></div>
<!-- keys -->
<svg class="a" style="left:368px;top:197px" width="46" height="50" viewBox="0 0 46 50">
<defs><linearGradient id="sk" x1="0" y1="0" x2="1" y2="1"><stop offset="0" stop-color="#f4f4f6"/><stop offset="1" stop-color="#9a9ea6"/></linearGradient>
<linearGradient id="gk" x1="0" y1="0" x2="1" y2="1"><stop offset="0" stop-color="#fbe08a"/><stop offset="0.5" stop-color="#f0b830"/><stop offset="1" stop-color="#c88a18"/></linearGradient></defs>
<path d="M5 16 Q3 2 16 2 Q29 2 29 14" fill="none" stroke="#8c9096" stroke-width="2.6"/>
<rect x="3" y="8" width="15" height="21" rx="3" fill="url(#sk)" stroke="#6c7078" stroke-width="1" transform="rotate(-8 10 18)"/>
<path d="M13 28 L19 27 L23 48 L17 48z" fill="#dcdde0" stroke="#7c8088" stroke-width="1"/>
<path d="M14 33 h-3 M15 37 h-3 M16 41 h-3" stroke="#7c8088" stroke-width="1.2"/>
<rect x="15" y="4" width="18" height="20" rx="3" fill="url(#gk)" stroke="#a87010" stroke-width="1" transform="rotate(18 24 14)"/>
<path d="M27 20 L33 18 L44 42 L38 45z" fill="#f2c23a" stroke="#b07812" stroke-width="1"/>
<path d="M38 30 l4 -1.5 M40 34 l4 -1.5 M42 38 l3 -1" stroke="#b07812" stroke-width="1.3"/>
<path d="M20 12 Q24 6 30 9 Q34 14 29 18" fill="none" stroke="#888c92" stroke-width="2.2"/>
</svg>
<!-- body -->
<div class="a" style="left:352px;top:253px;width:320px;height:316px;background:#ece9d8"></div>
<div class="t" style="left:365px;top:273px;font-size:11px;color:#000;line-height:13px;white-space:pre">Der Server "www.mod2.norwegen-angelfreunde.de" an
"Access to /mod2" erfordert einen Benutzernamen und ein
Kennwort.

Warnung: Dieser Server fordert das Senden von
Benutzernamen und Kennwort auf unsichere Art an
(Basisauthentifizierung ohne eine sichere Verbindung).</div>
<div class="t" style="left:362px;top:424px;font-size:11px;color:#000">Benutzername:</div>
<div class="t" style="left:362px;top:452px;font-size:11px;color:#000">Kennwort:</div>
<div class="a" style="left:468px;top:419px;width:194px;height:22px;background:#fff;border:1px solid #7f9db9;border-color:#8c8c8c"></div>
<svg class="a" style="left:472px;top:422px" width="14" height="16" viewBox="0 0 14 16"><path d="M3 5 Q3 1 8 1 Q12 1 12 5 L11 9 Q11 12 9 12 L12 15 H2 L4 12 Q2 10 3 5z" fill="#1d2a6e"/><path d="M7 5 Q10 5 10 8 Q9 11 7 11 Q6 9 7 5z" fill="#d8dcf0"/></svg>
<div class="a" style="left:645px;top:421px;width:15px;height:18px;background:linear-gradient(135deg,#d2dcf7,#b6c6f0);border:1px solid #c0cdee"></div>
<svg class="a" style="left:647px;top:426px" width="12" height="8"><path d="M1.5 1.5L6 6l4.5-4.5" fill="none" stroke="#4d6185" stroke-width="2.2"/></svg>
<div class="a" style="left:468px;top:447px;width:194px;height:20px;background:#fff;border:1px solid #8c8c8c"></div>
<div class="a" style="left:468px;top:479px;width:13px;height:13px;border:1px solid #1c5180;background:linear-gradient(135deg,#dcdcd7,#fdfdfb)"></div>
<div class="t" style="left:483px;top:481px;font-size:11px;color:#000">Kennwort speichern</div>
<div class="a" style="left:506px;top:537px;width:73px;height:21px;border:1px solid #003c74;border-radius:3px;background:linear-gradient(#fefefe,#f0f0ea 80%,#d8d4c8);box-shadow:inset 0 0 0 1px #b8d0f6,inset 0 -1px 0 1px #90b0e8"></div>
<div class="t" style="left:534px;top:542px;font-size:11px;color:#000">OK</div>
<div class="a" style="left:587px;top:537px;width:73px;height:21px;border:1px solid #003c74;border-radius:3px;background:linear-gradient(#fefefe,#f4f4ee 80%,#d8d4c8)"></div>
<div class="t" style="left:597px;top:542px;font-size:11px;color:#000">Abbrechen</div>

</body></html>
